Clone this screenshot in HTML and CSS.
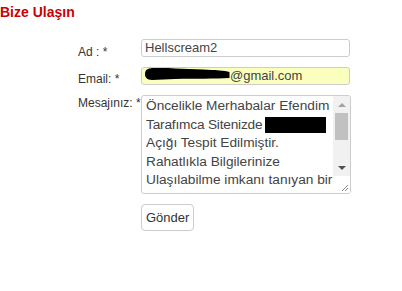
FILE: index.html
```html
<!DOCTYPE html>
<html lang="tr">
<head>
<meta charset="utf-8">
<title>Bize Ulaşın</title>
<link rel="stylesheet" href="styles.css">
</head>
<body>
<h1 class="title">Bize Ulaşın</h1>
<form class="form">
  <label class="lbl lbl-ad">Ad : *</label>
  <div class="field field-ad">Hellscream2</div>

  <label class="lbl lbl-email">Email: *</label>
  <div class="field field-email">
    <svg class="blob" width="85" height="13" viewBox="0 0 85 13"><path d="M2,2.5 C6,0 18,0.5 30,1.5 L58,2.5 C70,3 80,3.5 84.5,5 L84.5,11 C70,12 50,11.5 30,12 L7,13 C2,13 0,10 0,7.5 C0,5 0.5,3.5 2,2.5 Z" fill="#000"/></svg>
    <span class="email-rest">@gmail.com</span>
  </div>

  <label class="lbl lbl-msg">Mesajınız: *</label>
  <div class="textarea">
    <div class="ta-text">
      <span class="ln">Öncelikle Merhabalar Efendim</span>
      <span class="ln ln-tight">Tarafımca Sitenizde <span class="redact"></span></span>
      <span class="ln">Açığı Tespit Edilmiştir.</span>
      <span class="ln">Rahatlıkla Bilgilerinize</span>
      <span class="ln">Ulaşılabilme imkanı tanıyan bir</span>
      <span class="ln">açık olarak görülmüştür.</span>
    </div>
    <div class="ta-bar">
      <div class="sb-btn"><span class="arrow-up"></span></div>
      <div class="sb-track"><div class="sb-thumb"></div></div>
      <div class="sb-btn"><span class="arrow-down"></span></div>
      <div class="sb-corner">
        <svg width="17" height="17" viewBox="0 0 17 17"><path d="M15,9 L9,15 M15,12 L12,15" stroke="#8a8a8a" stroke-width="1"/></svg>
      </div>
    </div>
  </div>

  <span class="spacer"></span>
  <div class="btn-cell"><button type="button" class="btn">Gönder</button></div>
</form>
</body>
</html>
```
FILE: styles.css
```css
html, body {
  margin: 0;
  padding: 0;
  background: #fff;
}
body {
  font-family: "Liberation Sans", Arial, sans-serif;
  color: #333;
}
.title {
  margin: 0;
  padding-top: 4px;
  font-size: 14px;
  line-height: 16px;
  font-weight: bold;
  color: #c00;
}
.form {
  display: grid;
  grid-template-columns: 63px 210px;
  row-gap: 10px;
  margin: 19px 0 0 78px;
}
.lbl {
  box-sizing: border-box;
  height: 17px;
  font-size: 12px;
  line-height: 14px;
  color: #333;
  white-space: nowrap;
}
.lbl-ad { padding-top: 6px; }
.lbl-email { padding-top: 5px; }
.lbl-msg { padding-top: 1px; }

.field {
  box-sizing: border-box;
  width: 209px;
  border: 1px solid #ccc;
  border-radius: 3px;
  font-size: 13px;
  line-height: 16px;
  color: #444;
  padding: 0 3px;
}
.field-ad {
  height: 18px;
  background: #fff;
}
.field-email {
  height: 18px;
  background: #faffbd;
  display: flex;
  align-items: flex-start;
  padding-left: 3px;
  overflow: hidden;
}
.blob {
  display: block;
  flex: none;
  margin-top: -1px;
}
.email-rest {
  line-height: 15px;
}

.textarea {
  box-sizing: border-box;
  width: 210px;
  height: 99px;
  border: 1px solid #ccc;
  border-radius: 3px;
  display: flex;
  overflow: hidden;
  background: #fff;
}
.ta-text {
  flex: 1;
  overflow: hidden;
  padding: 1px 4px 0;
  font-size: 13.7px;
  line-height: 18.6px;
  color: #444;
}
.ln {
  display: block;
  white-space: nowrap;
}
.ln-tight {
  letter-spacing: -0.2px;
}
.redact {
  display: inline-block;
  width: 61px;
  height: 16px;
  margin-left: -1px;
  background: #000;
  vertical-align: -4px;
}
.ta-bar {
  width: 17px;
  flex: none;
  display: flex;
  flex-direction: column;
  background: #f1f1f1;
}
.sb-btn {
  height: 17px;
  display: flex;
  align-items: center;
  justify-content: center;
}
.arrow-up {
  width: 0;
  height: 0;
  border-left: 4px solid transparent;
  border-right: 4px solid transparent;
  border-bottom: 4px solid #a3a3a3;
}
.arrow-down {
  width: 0;
  height: 0;
  border-left: 4px solid transparent;
  border-right: 4px solid transparent;
  border-top: 4px solid #505050;
}
.sb-track {
  height: 46px;
  display: flex;
  justify-content: center;
}
.sb-thumb {
  width: 13px;
  height: 27px;
  background: #c1c1c1;
}
.sb-corner {
  height: 17px;
  background: #fff;
}
.sb-corner svg {
  display: block;
}
.btn-cell {
  display: flex;
}
.btn {
  box-sizing: border-box;
  height: 27px;
  padding: 0 4px;
  border: 1px solid #ccc;
  border-radius: 4px;
  background: #fff;
  font-family: "Liberation Sans", Arial, sans-serif;
  font-size: 13px;
  color: #333;
  cursor: pointer;
}
```
